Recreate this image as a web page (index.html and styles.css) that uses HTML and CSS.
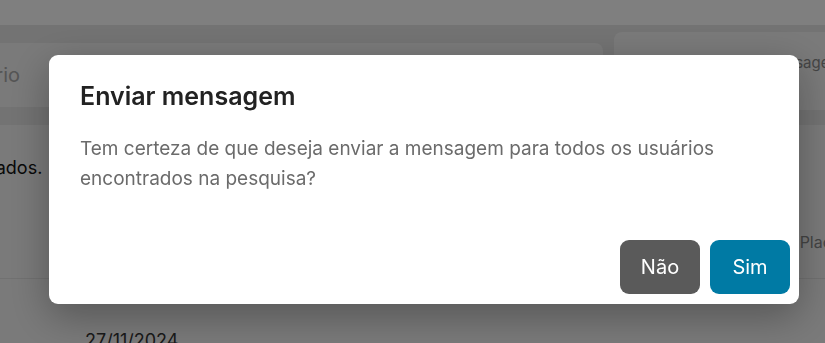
FILE: index.html
```html
<!DOCTYPE html>
<html lang="pt-BR">
<head>
<meta charset="utf-8">
<title>Enviar mensagem</title>
<link rel="stylesheet" href="styles.css">
</head>
<body>
<div class="page">
  <div class="topbar"></div>
  <div class="toolbar">
    <div class="card card-left"><span class="placeholder">Usuário</span></div>
    <div class="card card-right"><span class="label">Mensagem</span></div>
  </div>
  <div class="content">
    <div class="info">Nenhum resultado encontrado. Mostrando resultados.</div>
    <div class="plac">Placa</div>
  </div>
  <div class="rows">
    <div class="date">27/11/2024</div>
  </div>
</div>

<div class="overlay">
  <div class="modal" role="dialog" aria-labelledby="mtitle">
    <h2 class="modal-title" id="mtitle">Enviar mensagem</h2>
    <p class="modal-body">Tem certeza de que deseja enviar a mensagem para todos os usuários encontrados na pesquisa?</p>
    <div class="modal-footer">
      <button class="btn btn-no">Não</button>
      <button class="btn btn-yes">Sim</button>
    </div>
  </div>
</div>
</body>
</html>
```

FILE: styles.css
```css
html, body {
  margin: 0;
  padding: 0;
}
body {
  font-family: Inter, "Noto Sans", sans-serif;
  background: #f4f4f4;
  width: 825px;
  height: 343px;
  overflow: hidden;
}
.page {
  display: flex;
  flex-direction: column;
}
.topbar {
  height: 25px;
  background: #ffffff;
}
.toolbar {
  background: #e6e6e6;
  display: flex;
  gap: 11px;
  padding: 12px 0 18px 0;
  height: 70px;
  box-sizing: content-box;
  align-items: flex-start;
}
.card {
  background: #f5f5f5;
  border-radius: 8px;
  box-sizing: border-box;
}
.card-left {
  margin-left: -20px;
  margin-top: 6px;
  width: 623px;
  height: 64px;
  display: flex;
  align-items: center;
  justify-content: flex-end;
  padding-right: 583px;
}
.placeholder {
  color: #aaaaaa;
  font-size: 20px;
  white-space: nowrap;
}
.card-right {
  flex: 1;
  margin-right: -20px;
  height: 78px;
  margin-top: -5px;
  padding: 20px 0 0 150px;
}
.label {
  color: #8a8a8a;
  font-size: 15px;
  white-space: nowrap;
}
.content {
  height: 153px;
  position: relative;
  border-bottom: 1px solid #e2e2e2;
  display: flex;
  justify-content: space-between;
  align-items: flex-start;
  overflow: hidden;
}
.info {
  font-size: 18px;
  color: #111;
  white-space: nowrap;
  margin-left: -418px;
  margin-top: 32px;
}
.plac {
  font-size: 16px;
  color: #888;
  margin-top: 107px;
  margin-right: -16px;
}
.rows {
  padding: 51px 0 0 85px;
}
.date {
  font-size: 18px;
  color: #333;
}

.overlay {
  position: fixed;
  inset: 0;
  background: rgba(0, 0, 0, 0.5);
}
.modal {
  position: absolute;
  left: 49px;
  top: 55px;
  width: 750px;
  height: 249px;
  box-sizing: border-box;
  background: #ffffff;
  border-radius: 9px;
  box-shadow: 0 12px 40px rgba(0, 0, 0, 0.3);
  padding: 25px 9px 10px 31px;
  display: flex;
  flex-direction: column;
}
.modal-title {
  margin: 0;
  font-size: 25px;
  font-weight: 600;
  line-height: 32px;
  color: #222222;
}
.modal-body {
  margin: 22px 0 0 0;
  font-size: 19px;
  line-height: 30px;
  color: #6b6b6b;
  width: 680px;
}
.modal-footer {
  margin-top: auto;
  display: flex;
  justify-content: flex-end;
  gap: 10px;
}
.btn {
  width: 80px;
  height: 54px;
  border: 0;
  border-radius: 9px;
  font-family: Inter, "Noto Sans", sans-serif;
  font-size: 20px;
  color: #ffffff;
  padding: 0;
}
.btn-no {
  background: #5a5a5a;
}
.btn-yes {
  background: #007aa4;
}
```
